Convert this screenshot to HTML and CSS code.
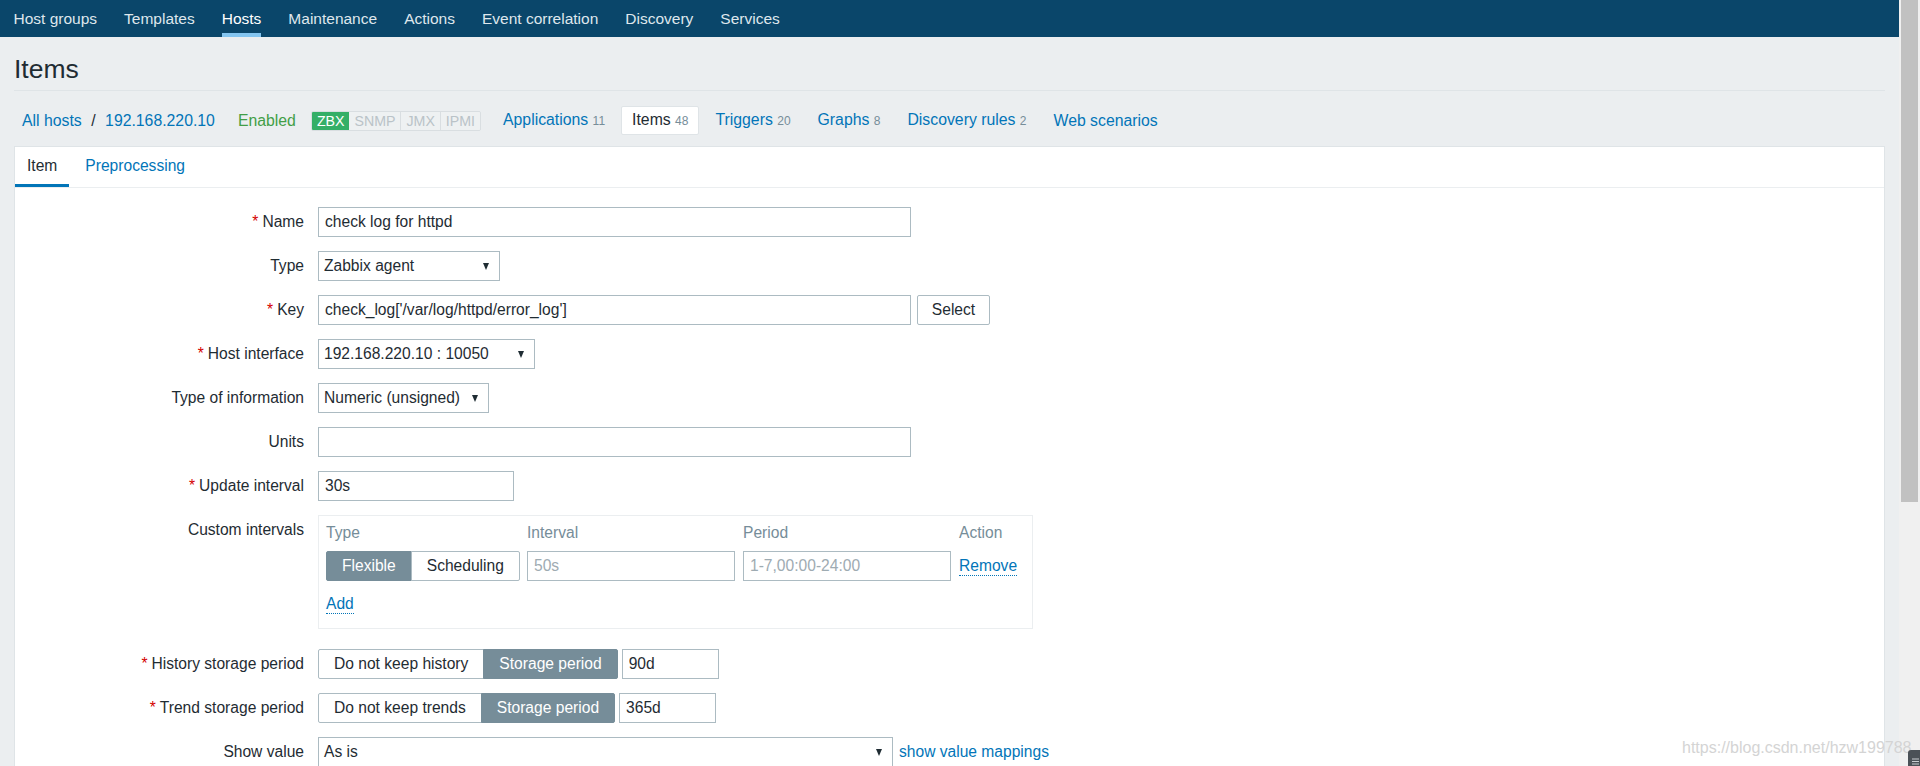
FILE: index.html
```html
<!DOCTYPE html>
<html lang="en">

<head>
    <meta charset="UTF-8">
    <meta name="viewport" content="width=device-width, initial-scale=1.0">
    <title>Configuration of items</title>
    <link rel="stylesheet" href="styles.css">
</head>

<body>
    <div class="layout">
        <div class="main">
            <nav class="top-nav">
                <ul>
                    <li><a href="#">Host groups</a></li>
                    <li><a href="#">Templates</a></li>
                    <li class="selected"><a href="#">Hosts</a></li>
                    <li><a href="#">Maintenance</a></li>
                    <li><a href="#">Actions</a></li>
                    <li><a href="#">Event correlation</a></li>
                    <li><a href="#">Discovery</a></li>
                    <li><a href="#">Services</a></li>
                </ul>
            </nav>

            <div class="wrapper">
                <header class="header-title">
                    <h1>Items</h1>
                </header>

                <ul class="object-group">
                    <li class="breadcrumbs"><a href="#">All hosts</a><span class="sep">/</span><a href="#">192.168.220.10</a></li>
                    <li class="status-enabled">Enabled</li>
                    <li class="status-container">
                        <span class="status-green">ZBX</span><span class="status-grey">SNMP</span><span class="status-grey">JMX</span><span class="status-grey">IPMI</span>
                    </li>
                    <li class="entity"><a href="#">Applications</a> <span class="count">11</span></li>
                    <li class="entity selected"><span>Items</span> <span class="count">48</span></li>
                    <li class="entity"><a href="#">Triggers</a> <span class="count">20</span></li>
                    <li class="entity"><a href="#">Graphs</a> <span class="count">8</span></li>
                    <li class="entity"><a href="#">Discovery rules</a> <span class="count">2</span></li>
                    <li class="entity"><a href="#">Web scenarios</a></li>
                </ul>

                <div class="table-forms-container">
                    <ul class="tabs">
                        <li class="active"><a href="#">Item</a></li>
                        <li><a href="#">Preprocessing</a></li>
                    </ul>

                    <ul class="form-list">
                        <li>
                            <label class="asterisk">Name</label>
                            <input class="input w-wide" type="text" value="check log for httpd">
                        </li>
                        <li>
                            <label>Type</label>
                            <div class="select w-type">Zabbix agent</div>
                        </li>
                        <li>
                            <label class="asterisk">Key</label>
                            <input class="input w-wide" type="text" value="check_log['/var/log/httpd/error_log']">
                            <button class="btn-alt">Select</button>
                        </li>
                        <li>
                            <label class="asterisk">Host interface</label>
                            <div class="select w-iface">192.168.220.10 : 10050</div>
                        </li>
                        <li>
                            <label>Type of information</label>
                            <div class="select w-info">Numeric (unsigned)</div>
                        </li>
                        <li>
                            <label>Units</label>
                            <input class="input w-wide" type="text" value="">
                        </li>
                        <li>
                            <label class="asterisk">Update interval</label>
                            <input class="input w-small" type="text" value="30s">
                        </li>
                        <li class="row-intervals">
                            <label>Custom intervals</label>
                            <div class="intervals-box">
                                <div class="interval-grid">
                                    <div class="th">Type</div>
                                    <div class="th">Interval</div>
                                    <div class="th">Period</div>
                                    <div class="th">Action</div>

                                    <div class="radio-segmented">
                                        <span class="on">Flexible</span><span>Scheduling</span>
                                    </div>
                                    <input class="input" type="text" placeholder="50s">
                                    <input class="input" type="text" placeholder="1-7,00:00-24:00">
                                    <div><a class="link-action" href="#">Remove</a></div>
                                </div>
                                <div class="add-row"><a class="link-action" href="#">Add</a></div>
                            </div>
                        </li>
                        <li>
                            <label class="asterisk">History storage period</label>
                            <div class="radio-segmented">
                                <span>Do not keep history</span><span class="on">Storage period</span>
                            </div>
                            <input class="input w-period" type="text" value="90d">
                        </li>
                        <li>
                            <label class="asterisk">Trend storage period</label>
                            <div class="radio-segmented">
                                <span>Do not keep trends</span><span class="on">Storage period</span>
                            </div>
                            <input class="input w-period" type="text" value="365d">
                        </li>
                        <li>
                            <label>Show value</label>
                            <div class="select w-show">As is</div>
                            <a class="mappings" href="#">show value mappings</a>
                        </li>
                    </ul>
                </div>
            </div>
        </div>

        <div class="scrollbar">
            <div class="thumb"></div>
        </div>
    </div>

    <div class="watermark">https://blog.csdn.net/hzw199788</div>
    <div class="corner-icon">
        <svg width="12" height="16" viewBox="0 0 12 16">
            <rect x="0" y="0" width="14" height="18" rx="3" fill="#4b5157"/>
            <path d="M4 9h7M4 11.5h7M4 14h7" stroke="#c9cdd1" stroke-width="1"/>
        </svg>
    </div>
</body>
</html>
```

FILE: styles.css
```css
* {
    margin: 0;
    padding: 0;
    box-sizing: border-box;
}

body {
    font-family: Arial, "Liberation Sans", sans-serif;
    font-size: 15.6px;
    color: #1f2c33;
    background-color: #ebeef0;
    overflow: hidden;
}

a {
    color: #0275b8;
    text-decoration: none;
}

ul {
    list-style: none;
}

.layout {
    display: flex;
    height: 766px;
    overflow: hidden;
}

.main {
    flex: 1;
    min-width: 0;
}

/* top menu */
.top-nav {
    background-color: #0a466a;
    height: 37px;
}

.top-nav ul {
    display: flex;
}

.top-nav a {
    display: block;
    margin: 0 13.5px;
    padding-top: 4px;
    line-height: 29px;
    border-bottom: 4px solid transparent;
    color: #dfe7ed;
    font-size: 15.5px;
}

.top-nav .selected a {
    color: #fff;
    border-bottom-color: #84c5f0;
}

.wrapper {
    padding: 0 14px;
}

.header-title {
    padding: 17px 0 6px;
    border-bottom: 1px solid #dfe4e7;
}

.header-title h1 {
    font-size: 26.5px;
    font-weight: normal;
    line-height: 30px;
}

/* host header */
.object-group {
    display: flex;
    align-items: center;
    margin-left: 8px;
    padding: 15px 0 11px;
    font-size: 15.8px;
}

.breadcrumbs {
    line-height: 27px;
}

.breadcrumbs .sep {
    margin: 0 9.5px;
}

.status-enabled {
    color: #429e47;
    margin-left: 23px;
}

.status-container {
    display: flex;
    margin-left: 15px;
    margin-right: 11px;
    font-size: 14.2px;
    line-height: 18px;
    border: 1px solid #d9dee1;
    border-radius: 2px;
    overflow: hidden;
}

.status-container span {
    padding: 0 5px;
}

.status-green {
    background-color: #34af67;
    color: #fff;
}

.status-grey {
    background-color: #eef1f2;
    color: #bac3c8;
}

.status-grey + .status-grey {
    border-left: 1px solid #d9dee1;
}

.entity {
    padding: 0 11px;
    line-height: 27px;
    margin-right: 5px;
}

.entity.selected {
    background-color: #fff;
    border: 1px solid #dfe4e7;
    border-radius: 2px;
    padding: 0 10px;
    line-height: 25px;
}

.count {
    font-size: 12px;
    color: #768d99;
}

/* form container */
.table-forms-container {
    background-color: #fff;
    border: 1px solid #dfe4e7;
    min-height: 700px;
}

.tabs {
    display: flex;
    border-bottom: 1px solid #ebeef0;
}

.tabs a {
    display: block;
    padding: 0 12px;
    margin-right: 4px;
    line-height: 37px;
    border-bottom: 3px solid transparent;
}

.tabs .active a {
    color: #1f2c33;
    border-bottom-color: #0275b8;
}

.form-list {
    padding-top: 19px;
}

.form-list > li {
    display: flex;
    align-items: flex-start;
    margin-bottom: 14px;
}

.form-list > li.row-intervals {
    margin-bottom: 20px;
}

.form-list label {
    flex: 0 0 289px;
    margin-right: 14px;
    text-align: right;
    line-height: 29px;
}

.form-list .asterisk::before {
    content: "*";
    color: #d40000;
    margin-right: 4px;
}

/* controls */
.input {
    height: 30px;
    border: 1px solid #acbbc2;
    padding: 0 6px;
    font: inherit;
    color: #1f2c33;
    background-color: #fff;
    outline: none;
}

.input::placeholder {
    color: #9eabb2;
}

.w-wide {
    width: 593px;
}

.w-small {
    width: 196px;
}

.w-period {
    width: 97px;
    margin-left: 4px;
}

.select {
    display: flex;
    align-items: center;
    justify-content: space-between;
    height: 30px;
    padding: 0 10px 0 5px;
    border: 1px solid #acbbc2;
    background-color: #fff;
}

.select::after {
    content: "";
    border-left: 3.5px solid transparent;
    border-right: 3.5px solid transparent;
    border-top: 7px solid #1f2c33;
}

.w-type {
    width: 182px;
}

.w-iface {
    width: 217px;
}

.w-info {
    width: 171px;
}

.w-show {
    width: 575px;
}

.btn-alt {
    width: 73px;
    height: 30px;
    margin-left: 6px;
    font: inherit;
    color: #1f2c33;
    background-color: #fff;
    border: 1px solid #acbbc2;
    border-radius: 2px;
}

.mappings {
    margin-left: 6px;
    line-height: 30px;
}

.radio-segmented {
    display: flex;
}

.radio-segmented span {
    height: 30px;
    line-height: 28px;
    padding: 0 15px;
    border: 1px solid #acbbc2;
    background-color: #fff;
    white-space: nowrap;
}

.radio-segmented span + span {
    margin-left: -1px;
}

.radio-segmented span:first-child {
    border-radius: 2px 0 0 2px;
}

.radio-segmented span:last-child {
    border-radius: 0 2px 2px 0;
}

.radio-segmented .on {
    background-color: #768d99;
    border-color: #768d99;
    color: #fff;
}

/* custom intervals */
.intervals-box {
    width: 715px;
    border: 1px solid #ebeef0;
    padding: 7px 7px 14px;
}

.interval-grid {
    display: grid;
    grid-template-columns: 193px 208px 208px auto;
    column-gap: 8px;
    row-gap: 8px;
    align-items: center;
}

.interval-grid .th {
    color: #768d99;
    line-height: 20px;
}

.interval-grid .input {
    width: 100%;
}

.add-row {
    margin-top: 14px;
    line-height: 18px;
}

.link-action {
    display: inline-block;
    line-height: 18px;
    border-bottom: 1px dotted #0275b8;
}

/* browser chrome */
.scrollbar {
    width: 21px;
    padding: 0 2px;
    background-color: #f0f0f0;
}

.scrollbar .thumb {
    height: 502px;
    background-color: #c1c1c1;
}

.watermark {
    position: absolute;
    left: 1682px;
    top: 739px;
    font-size: 16px;
    line-height: 18px;
    color: #d4d4d4;
    white-space: nowrap;
}

.corner-icon {
    position: absolute;
    right: 0;
    bottom: 0;
    width: 12px;
    height: 16px;
    line-height: 0;
}
```
